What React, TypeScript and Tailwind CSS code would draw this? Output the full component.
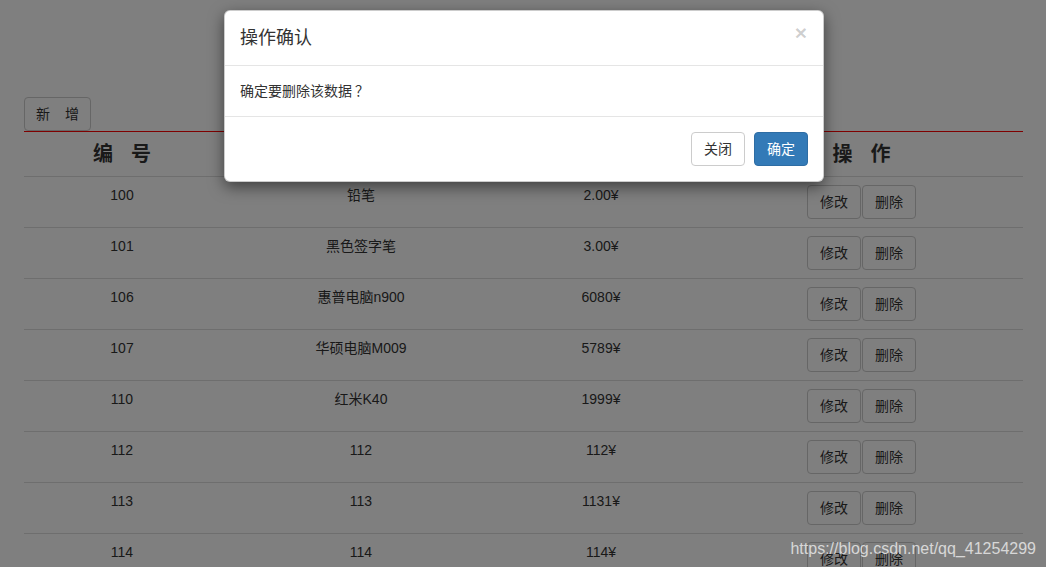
const rows = [
	{ id: '100', name: '铅笔', price: '2.00¥' },
	{ id: '101', name: '黑色签字笔', price: '3.00¥' },
	{ id: '106', name: '惠普电脑n900', price: '6080¥' },
	{ id: '107', name: '华硕电脑M009', price: '5789¥' },
	{ id: '110', name: '红米K40', price: '1999¥' },
	{ id: '112', name: '112', price: '112¥' },
	{ id: '113', name: '113', price: '1131¥' },
	{ id: '114', name: '114', price: '114¥' },
];

const font = { fontFamily: '"Liberation Sans", "Noto Sans CJK SC", sans-serif' };

function HeadCell({ a, b }: { a: string; b: string }) {
	return (
		<th className="px-2 py-2 text-center">
			<span className="inline-flex gap-[18px] text-[20px] leading-[28px] font-bold text-[#333]">
				<span>{a}</span>
				<span>{b}</span>
			</span>
		</th>
	);
}

function SmallButton({ label }: { label: string }) {
	return (
		<button
			type="button"
			className="h-[34px] w-[54px] rounded-[4px] border border-[#ccc] bg-white text-[14px] leading-[20px] text-[#333]"
		>
			{label}
		</button>
	);
}

export default function App() {
	return (
		<div className="relative h-[567px] w-[1046px] overflow-hidden bg-white text-[14px] text-[#333]" style={font}>
			<div className="px-[24px] pt-[97px]">
				<button
					type="button"
					className="flex h-[34px] w-[67px] items-center justify-center gap-[15px] rounded-[4px] border border-[#ccc] bg-white text-[14px] leading-[20px] text-[#333]"
				>
					<span>新</span>
					<span>增</span>
				</button>
				<table className="w-[999px] table-fixed border-collapse border-t border-[#ff0000]">
					<colgroup>
						<col className="w-[196px]" />
						<col className="w-[282px]" />
						<col className="w-[198px]" />
						<col className="w-[323px]" />
					</colgroup>
					<thead>
						<tr className="border-b border-[#ddd]">
							<HeadCell a="编" b="号" />
							<HeadCell a="名" b="称" />
							<HeadCell a="价" b="格" />
							<HeadCell a="操" b="作" />
						</tr>
					</thead>
					<tbody>
						{rows.map((r) => (
							<tr key={r.id} className="border-b border-[#ddd]">
								<td className="px-2 py-2 text-center align-top leading-[20px]">{r.id}</td>
								<td className="px-2 py-2 text-center align-top leading-[20px]">{r.name}</td>
								<td className="px-2 py-2 text-center align-top leading-[20px]">{r.price}</td>
								<td className="px-2 py-2 align-top">
									<div className="flex justify-center gap-[1px]">
										<SmallButton label="修改" />
										<SmallButton label="删除" />
									</div>
								</td>
							</tr>
						))}
					</tbody>
				</table>
			</div>

			{/* backdrop + modal */}
			<div className="absolute inset-0 bg-black/50" />
			<div className="absolute inset-0 pl-[224px]">
				<div className="mt-[10px] w-[600px] rounded-[6px] border border-black/20 bg-white shadow-[0_5px_15px_rgba(0,0,0,0.5)]">
					<div className="flex items-start justify-between border-b border-[#e5e5e5] p-[15px]">
						<h4 className="text-[18px] leading-[24px] font-normal text-[#333]">操作确认</h4>
						<span className="mt-[-5px] mr-[1px] text-[21px] leading-[24px] font-bold text-black/20">×</span>
					</div>
					<div className="p-[15px] text-[14px] leading-[20px] text-[#333]">
						确定要删除该数据<span className="ml-[3px]">？</span>
					</div>
					<div className="flex justify-end gap-[9px] border-t border-[#e5e5e5] p-[15px]">
						<button
							type="button"
							className="h-[34px] w-[54px] rounded-[4px] border border-[#ccc] bg-white text-[14px] leading-[20px] text-[#333]"
						>
							关闭
						</button>
						<button
							type="button"
							className="h-[34px] w-[54px] rounded-[4px] border border-[#2e6da4] bg-[#337ab7] text-[14px] leading-[20px] text-white"
						>
							确定
						</button>
					</div>
				</div>
			</div>

			<div className="absolute right-[10px] bottom-[8px] text-[16px] leading-[20px] text-white/70">
				https://blog.csdn.net/qq_41254299
			</div>
		</div>
	);
}
